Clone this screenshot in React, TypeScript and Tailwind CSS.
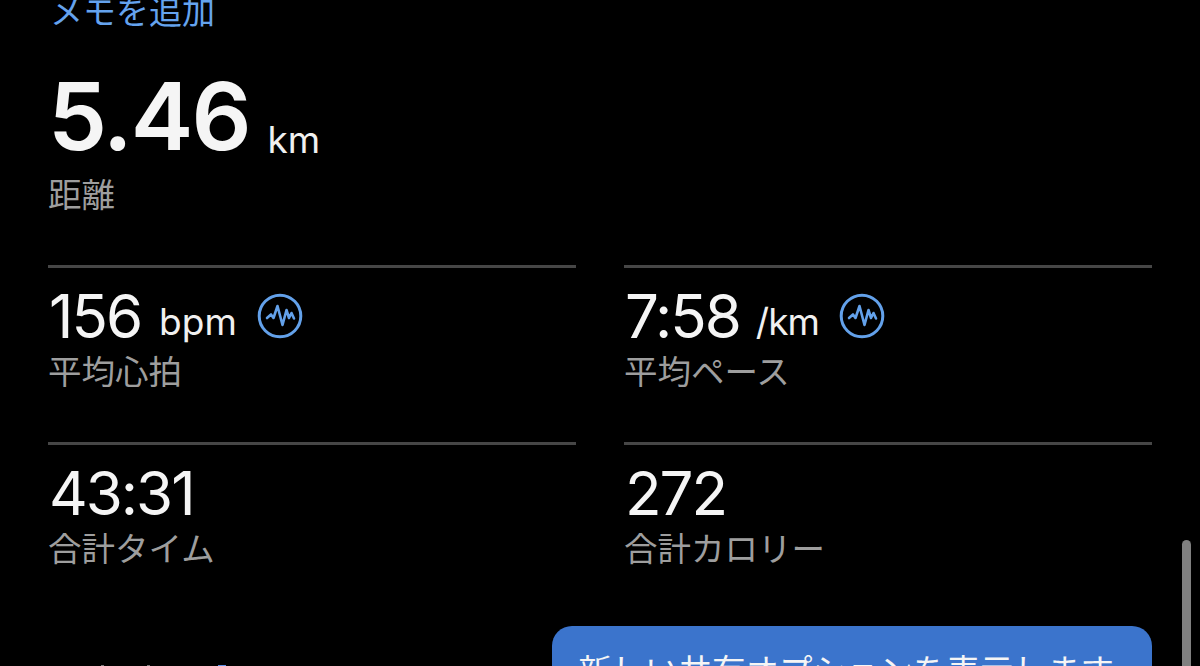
const sans = 'font-[Inter,"Noto_Sans_CJK_JP",sans-serif]';

function PulseBadge() {
  return (
    <svg viewBox="0 0 46 46" className="ml-[20px] h-[46px] w-[46px] shrink-0" fill="none" stroke="#63a1ea" aria-hidden>
      <circle cx="23" cy="23" r="20.8" strokeWidth="3" />
      <path
        d="M10 25 L14 21.5 L16.5 25 L20.5 13 L25.5 32 L29.5 17 L32 25 L34.5 20 L37 25.5"
        strokeWidth="2.6"
        strokeLinecap="round"
        strokeLinejoin="round"
      />
    </svg>
  );
}

type StatProps = {
  value: string;
  unit?: string;
  unitClass?: string;
  label: string;
  pulse?: boolean;
};

function Stat({ value, unit, unitClass = 'ml-[18px]', label, pulse }: StatProps) {
  return (
    <div className="h-[177px] border-t-[3px] border-[#464646] pl-[1px]">
      <div className="mt-[19px] flex h-[58px] items-center">
        <span className="text-[60px] leading-none font-normal tracking-[-2px] text-[#f5f5f5]">{value}</span>
        {unit && <span className={`mt-[11px] text-[37px] leading-none text-[#f0f0f0] ${unitClass}`}>{unit}</span>}
        {pulse && <PulseBadge />}
      </div>
      <div className="mt-[5px] -ml-[1px] text-[33.5px] leading-[44px] text-[#9e9e9e]">{label}</div>
    </div>
  );
}

export default function App() {
  return (
    <div className={`relative h-[666px] w-[1200px] overflow-hidden bg-black ${sans}`}>
      <div className="px-[48px]">
        <div className="-mt-[10px] pl-[2px] text-[33px] leading-[44px] text-[#65a3ee]">メモを追加</div>

        <div className="mt-[32px] flex h-[100px] items-end">
          <span className="text-[94px] leading-[100px] font-semibold tracking-[-2px] text-[#f5f5f5]">5.46</span>
          <span className="mb-[8px] ml-[18px] text-[37px] leading-none text-[#f0f0f0]">km</span>
        </div>
        <div className="mt-[7px] text-[33.5px] leading-[44px] text-[#9e9e9e]">距離</div>

        <div className="mt-[48px] grid grid-cols-2 gap-x-[48px]">
          <Stat value="156" unit="bpm" label="平均心拍" pulse />
          <Stat value="7:58" unit="/km" unitClass="ml-[16px] tracking-[-1px]" label="平均ペース" pulse />
          <Stat value="43:31" label="合計タイム" />
          <Stat value="272" label="合計カロリー" />
        </div>

        <div className="mt-[7px] flex items-start justify-between">
          {/* tops of the next row, just past the fold */}
          <div className="flex pt-[39px]">
            <span className="ml-[53px] h-[1px] w-[3px] bg-[#7a7a7a]" />
            <span className="ml-[43px] h-[1px] w-[3px] bg-[#7a7a7a]" />
            <span className="ml-[68px] h-[1px] w-[8px] bg-[#5c8fe6]" />
          </div>
          <div className="h-[100px] w-[600px] rounded-[20px] bg-[#3b74cc] pt-[23px] pl-[26px] text-[33.5px] leading-[44px] whitespace-nowrap text-[#f5f5f5]">
            新しい共有オプションを表示します
          </div>
        </div>
      </div>

      {/* scroll indicator sits over the content */}
      <div className="absolute top-[540px] left-[1182px] h-[140px] w-[9px] rounded-full bg-[#808080]" />
    </div>
  );
}
